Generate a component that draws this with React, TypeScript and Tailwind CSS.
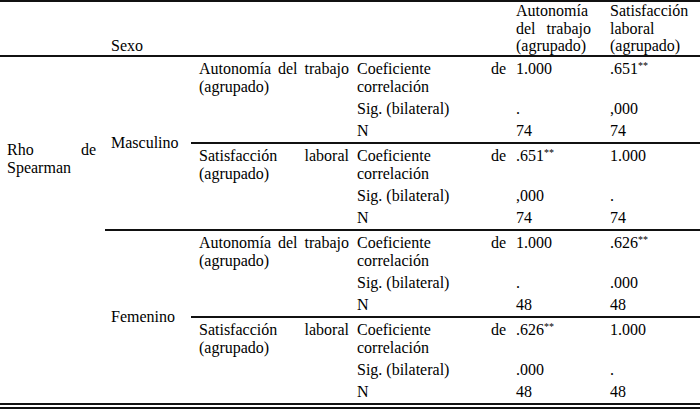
type Row = { coef: [string, boolean, string, boolean]; sig: [string, string]; n: [string, string] };

const groups: { sexo: string; vars: { name: string; row: Row }[] }[] = [
  {
    sexo: "Masculino",
    vars: [
      { name: "Autonomía del trabajo (agrupado)", row: { coef: ["1.000", false, ".651", true], sig: [".", ",000"], n: ["74", "74"] } },
      { name: "Satisfacción laboral (agrupado)", row: { coef: [".651", true, "1.000", false], sig: [",000", "."], n: ["74", "74"] } },
    ],
  },
  {
    sexo: "Femenino",
    vars: [
      { name: "Autonomía del trabajo (agrupado)", row: { coef: ["1.000", false, ".626", true], sig: [".", ".000"], n: ["48", "48"] } },
      { name: "Satisfacción laboral (agrupado)", row: { coef: [".626", true, "1.000", false], sig: [".000", "."], n: ["48", "48"] } },
    ],
  },
];

function Val({ v, star }: { v: string; star: boolean }) {
  return (
    <>
      {v}
      {star && <sup className="text-[10px]">**</sup>}
    </>
  );
}

const line = "border-b-2 border-[#111]";
const hd = "border-b-2 border-[#111] flex flex-col justify-end";
const c3 = "pl-[5px] pr-[3px] text-justify";
const c4 = "pl-[7px] pr-[13px]";
const c5 = "pl-[6px] pr-[4px]";

export default function App() {
  return (
    <div className="w-[700px] h-[409px] bg-white text-black [font-family:'Liberation_Serif','Times_New_Roman',serif] text-[16px] leading-[18px]">
      <div className="grid grid-cols-[105px_86px_161px_157px_95px_96px] border-t-2 border-b-[6px] border-[#111] [border-bottom-style:double]">
        {/* header */}
        <div className={hd} />
        <div className={`${hd} pl-[6px] leading-[17.5px]`}>Sexo</div>
        <div className={hd} />
        <div className={hd} />
        <div className={`${hd} ${c4} text-justify leading-[17.5px]`}>Autonomía del trabajo (agrupado)</div>
        <div className={`${hd} ${c5} leading-[17.5px]`}>Satisfacción laboral (agrupado)</div>

        {groups.map((g, gi) =>
          g.vars.map((vr, vi) => {
            const last = gi === groups.length - 1 && vi === g.vars.length - 1;
            const sub = last ? "" : line;
            return [
              gi === 0 && vi === 0 && (
                <div key="rho" className="row-span-12 pl-[7px] pr-[9px] pt-[84px] text-justify">
                  Rho de Spearman
                </div>
              ),
              vi === 0 && (
                <div key={`sx${gi}`} className={`row-span-6 pl-[6px] flex items-center ${gi === groups.length - 1 ? "" : line}`}>
                  {g.sexo}
                </div>
              ),
              <div key={`v${gi}${vi}`} className={`row-span-3 pl-[8px] pr-[3px] pt-[3px] text-justify ${sub}`}>
                {vr.name}
              </div>,
              <div key={`c3${gi}${vi}`} className={`${c3} pt-[3px] pb-[2px]`}>Coeficiente de correlación</div>,
              <div key={`c4${gi}${vi}`} className={`${c4} pt-[3px] pb-[2px]`}>
                <Val v={vr.row.coef[0]} star={vr.row.coef[1]} />
              </div>,
              <div key={`c5${gi}${vi}`} className={`${c5} pt-[3px] pb-[2px]`}>
                <Val v={vr.row.coef[2]} star={vr.row.coef[3]} />
              </div>,
              <div key={`s3${gi}${vi}`} className={`${c3} py-[2px]`}>Sig. (bilateral)</div>,
              <div key={`s4${gi}${vi}`} className={`${c4} py-[2px]`}>{vr.row.sig[0]}</div>,
              <div key={`s5${gi}${vi}`} className={`${c5} py-[2px]`}>{vr.row.sig[1]}</div>,
              <div key={`n3${gi}${vi}`} className={`${c3} py-[2px] ${sub}`}>N</div>,
              <div key={`n4${gi}${vi}`} className={`${c4} py-[2px] ${sub}`}>{vr.row.n[0]}</div>,
              <div key={`n5${gi}${vi}`} className={`${c5} py-[2px] ${sub}`}>{vr.row.n[1]}</div>,
            ];
          })
        )}
      </div>
    </div>
  );
}
